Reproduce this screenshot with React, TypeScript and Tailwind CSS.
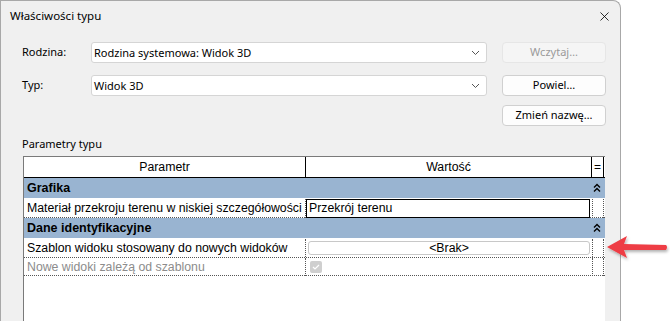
import { X } from 'lucide-react';

const font = { fontFamily: '"Noto Sans", "Open Sans", sans-serif' };
const tableFont = { fontFamily: '"Liberation Sans", Arial, sans-serif' };

const Chevron = () => (
  <svg width="9" height="6" viewBox="0 0 9 6" className="text-[#555]">
    <path d="M1 1l3.5 3.5L8 1" fill="none" stroke="currentColor" strokeWidth="1" />
  </svg>
);

const Collapse = () => (
  <svg width="8" height="10" viewBox="0 0 8 10">
    <path d="M1 4.5l3-3 3 3M1 8.5l3-3 3 3" fill="none" stroke="#000" strokeWidth="1.4" />
  </svg>
);

const Combo = ({ value }: { value: string }) => (
  <div className="h-[21px] w-[396px] bg-white border border-[#d5d5d5] rounded-[3px] flex items-center justify-between pl-[2px] pr-[6px]">
    <span className="text-[11px] text-black leading-none">{value}</span>
    <Chevron />
  </div>
);

const Btn = ({ label, disabled }: { label: string; disabled?: boolean }) => (
  <div
    className={
      disabled
        ? 'h-[21px] w-[104px] rounded-[4px] border border-[#e6e6e6] bg-[#f5f5f5] text-[#9a9a9a] text-[11px] flex items-center justify-center'
        : 'h-[21px] w-[104px] rounded-[4px] border border-[#d0d0d0] bg-[#fdfdfd] text-black text-[11px] flex items-center justify-center'
    }
  >
    {label}
  </div>
);

const Group = ({ title }: { title: string }) => (
  <div className="h-[21px] bg-[#99b4d1] flex items-center justify-between pl-[3px] pr-[4px] border-b border-white">
    <span className="font-bold text-[12.5px] text-black">{title}</span>
    <Collapse />
  </div>
);

export default function App() {
  return (
    <div className="w-[670px] h-[321px] bg-white flex overflow-hidden relative" style={font}>
      <div className="w-[621px] h-full bg-[#f0f0f0] border-t border-r border-l border-[#a8a8a8] rounded-tr-[8px] flex flex-col shrink-0">
        {/* title bar */}
        <div className="h-[30px] flex items-center justify-between pl-[9px] pr-[8px]">
          <span className="text-[11.5px] text-black">Właściwości typu</span>
          <X className="w-[15px] h-[15px] text-black" strokeWidth={1.3} />
        </div>

        {/* form */}
        <div className="pl-[21px] pt-[11px] flex flex-col">
          <div className="flex items-center h-[21px]">
            <span className="w-[69px] text-[11px]">Rodzina:</span>
            <Combo value="Rodzina systemowa: Widok 3D" />
            <div className="ml-[15px]">
              <Btn label="Wczytaj…" disabled />
            </div>
          </div>
          <div className="flex items-center h-[21px] mt-[12px]">
            <span className="w-[69px] text-[11px]">Typ:</span>
            <Combo value="Widok 3D" />
            <div className="ml-[15px]">
              <Btn label="Powiel…" />
            </div>
          </div>
          <div className="flex h-[21px] mt-[9px] pl-[480px]">
            <Btn label="Zmień nazwę…" />
          </div>
          <div className="text-[11px] mt-[9px] h-[18px] flex items-center">Parametry typu</div>
        </div>

        {/* table */}
        <div
          className="ml-[22px] mt-[3px] w-[582px] flex-1 bg-white border-l border-t border-[#7a7a7a] text-[12.3px] text-black"
          style={tableFont}
        >
          <div className="grid grid-cols-[282px_286px_12px] h-[21px] border-b border-black">
            <div className="flex items-center justify-center border-r border-black">Parametr</div>
            <div className="flex items-center justify-center border-r border-black">Wartość</div>
            <div className="flex items-center justify-center border-r border-black text-[12px] leading-none">=</div>
          </div>
          <Group title="Grafika" />
          <div className="grid grid-cols-[282px_286px_12px] h-[19px] border-b border-dotted border-[#555]">
            <div className="flex items-center pl-[3px] border-r border-dotted border-[#555] whitespace-nowrap">
              Materiał przekroju terenu w niskiej szczegółowości
            </div>
            <div className="pr-[2px]">
              <div className="h-[19px] border border-black flex items-center pl-[2px]">Przekrój terenu</div>
            </div>
            <div className="border-r border-l border-dotted border-[#555]" />
          </div>
          <Group title="Dane identyfikacyjne" />
          <div className="grid grid-cols-[282px_286px_12px] h-[19px] border-b border-dotted border-[#555]">
            <div className="flex items-center pl-[3px] border-r border-dotted border-[#555] whitespace-nowrap">
              Szablon widoku stosowany do nowych widoków
            </div>
            <div className="pl-[2px] pr-[2px] py-[2px]">
              <div className="h-full border border-[#c8c8c8] rounded-[3px] bg-white flex items-center justify-center leading-none">
                &lt;Brak&gt;
              </div>
            </div>
            <div className="border-r border-l border-dotted border-[#555]" />
          </div>
          <div className="grid grid-cols-[282px_286px_12px] h-[18px] border-b border-dotted border-[#555]">
            <div className="flex items-center pl-[3px] border-r border-dotted border-[#555] whitespace-nowrap text-[#8c8c8c]">
              Nowe widoki zależą od szablonu
            </div>
            <div className="flex items-center pl-[4px]">
              <div className="w-[12px] h-[12px] rounded-[2px] bg-[#cfcfcf] flex items-center justify-center">
                <svg width="8" height="6" viewBox="0 0 8 6">
                  <path d="M1 3l2 2 4-4" fill="none" stroke="#fff" strokeWidth="1.2" />
                </svg>
              </div>
            </div>
            <div className="border-r border-l border-dotted border-[#555]" />
          </div>
        </div>
      </div>

      {/* red annotation arrow */}
      <svg className="absolute left-[603px] top-[234px]" width="67" height="28" viewBox="0 0 67 28">
        <defs>
          <filter id="sh" x="-20%" y="-40%" width="140%" height="180%">
            <feDropShadow dx="1" dy="2" stdDeviation="1.5" floodColor="#000" floodOpacity="0.3" />
          </filter>
        </defs>
        <g filter="url(#sh)">
          <path d="M4 13 L24 2 L21 10 L63 11 Q65 13 63 16 L21 16 L24 24 Z" fill="#ee3e44" />
        </g>
      </svg>
    </div>
  );
}
